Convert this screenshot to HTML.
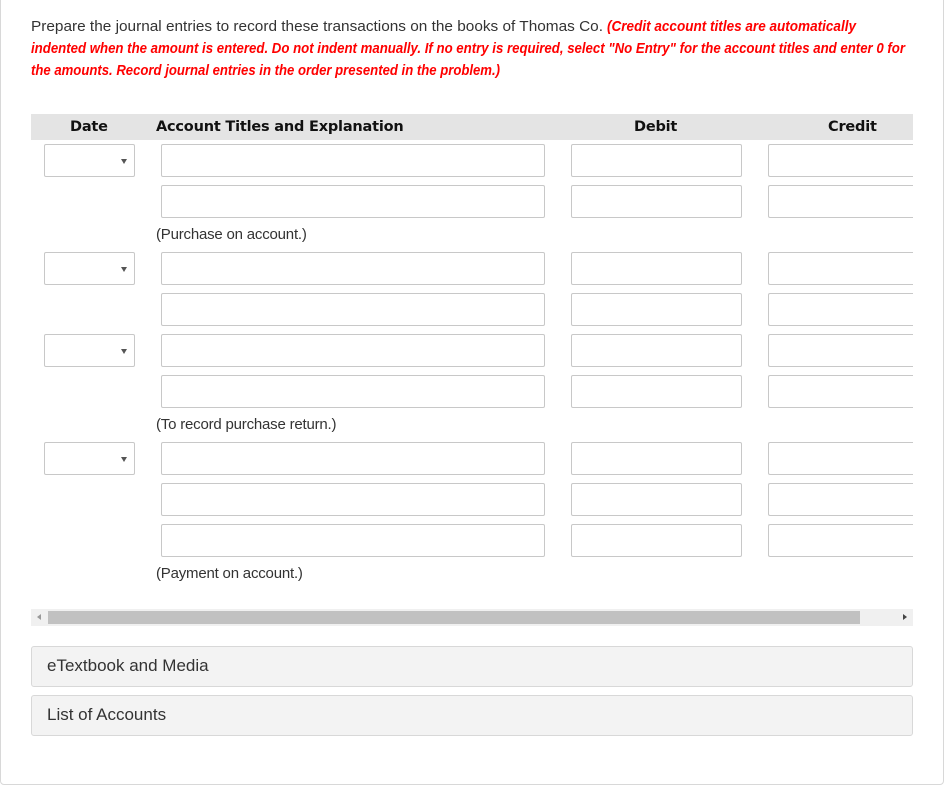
<!DOCTYPE html>
<html><head><style>
body{margin:0;width:947px;height:785px;background:#fff;font-family:"Liberation Sans",sans-serif;position:relative;overflow:hidden}
.box{position:absolute;left:0;top:-5px;width:942px;height:788px;border:1px solid #d8d8d8;border-radius:4px}
.a{position:absolute}
.hd{left:31px;top:114px;width:882px;height:26px;background:#e4e4e4}
.hd span{position:absolute;top:5px;font-family:"DejaVu Sans",sans-serif;font-weight:bold;font-size:14.5px;color:#111;letter-spacing:-0.2px}
.in{position:absolute;height:31px;border:1px solid #c8c8c8;border-radius:2px;background:#fff}
.lbl{position:absolute;left:156px;font-size:15px;color:#333;letter-spacing:-0.2px}
.sel:after{content:"";position:absolute;right:7px;top:14px;border-left:3px solid transparent;border-right:3px solid transparent;border-top:5px solid #555}
.pn{position:absolute;left:31px;width:880px;height:39px;border:1px solid #d8d8d8;border-radius:3px;background:#f3f3f3;font-size:17px;color:#333}
.pn span{position:absolute;left:15px;top:9px}
</style></head><body>
<div class="box"></div>
<svg class="a" style="left:0;top:0" width="947" height="90">
<g font-family="Liberation Sans, sans-serif" font-size="15">
<text x="31" y="31" fill="#333" textLength="572" lengthAdjust="spacingAndGlyphs">Prepare the journal entries to record these transactions on the books of Thomas Co.</text>
<g fill="#f00" font-weight="bold" font-style="italic">
<text x="607" y="31" textLength="249" lengthAdjust="spacingAndGlyphs">(Credit account titles are automatically</text>
<text x="31" y="53" textLength="874" lengthAdjust="spacingAndGlyphs">indented when the amount is entered. Do not indent manually. If no entry is required, select "No Entry" for the account titles and enter 0 for</text>
<text x="31" y="75" textLength="469" lengthAdjust="spacingAndGlyphs">the amounts. Record journal entries in the order presented in the problem.)</text>
</g></g></svg>
<div class="a hd"><span style="left:39px">Date</span><span style="left:125px">Account Titles and Explanation</span><span style="left:603px">Debit</span><span style="left:797px">Credit</span></div>

<div class="in sel" style="left:44px;top:144px;width:89px"></div>
<div class="in sel" style="left:44px;top:252px;width:89px"></div>
<div class="in sel" style="left:44px;top:334px;width:89px"></div>
<div class="in sel" style="left:44px;top:442px;width:89px"></div>

<div id="rows"></div>
<div class="lbl" style="top:226px">(Purchase on account.)</div>
<div class="lbl" style="top:416px">(To record purchase return.)</div>
<div class="lbl" style="top:565px">(Payment on account.)</div>

<div class="a" style="left:31px;top:609px;width:882px;height:17px;background:#f0f0f0"></div>
<div class="a" style="left:48px;top:611px;width:812px;height:13px;background:#c1c1c1"></div>
<div class="a" style="left:37px;top:614px;border-top:3px solid transparent;border-bottom:3px solid transparent;border-right:4px solid #999"></div>
<div class="a" style="left:903px;top:614px;border-top:3px solid transparent;border-bottom:3px solid transparent;border-left:4px solid #444"></div>

<div class="pn" style="top:646px"><span>eTextbook and Media</span></div>
<div class="pn" style="top:695px"><span>List of Accounts</span></div>
<script>
var ys=[144,185,252,293,334,375,442,483,524],h='';
ys.forEach(function(y){
h+='<div class="in" style="left:161px;top:'+y+'px;width:382px"></div>';
h+='<div class="in" style="left:571px;top:'+y+'px;width:169px"></div>';
h+='<div class="in" style="left:768px;top:'+y+'px;width:160px;border-right:none;border-radius:2px 0 0 2px"></div>';
});
document.getElementById('rows').innerHTML=h;
</script>
<div class="a" style="left:913px;top:140px;width:28px;height:430px;background:#fff"></div>
</body></html>
